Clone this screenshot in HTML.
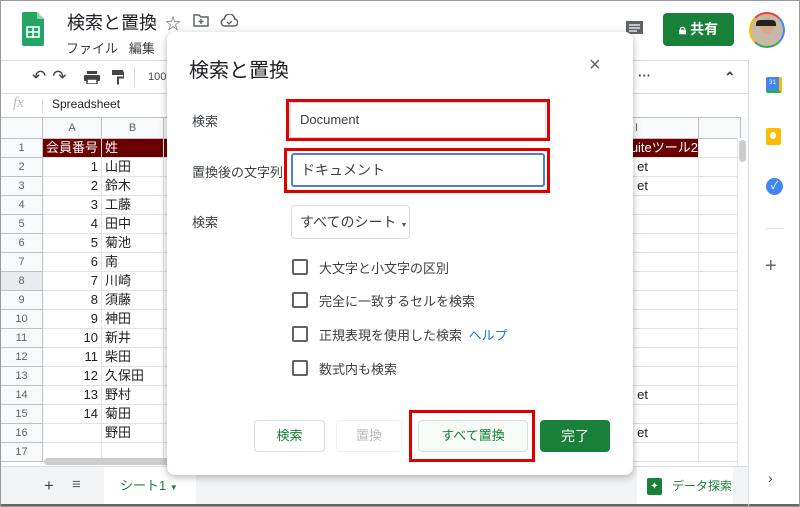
<!DOCTYPE html>
<html><head><meta charset="utf-8"><style>
*{box-sizing:border-box;margin:0;padding:0}
body{width:800px;height:507px;overflow:hidden;background:#fff;font-family:"Liberation Sans","Noto Sans CJK JP",sans-serif;color:#202124;position:relative}
.a{position:absolute;white-space:nowrap}
table{border-collapse:collapse;position:absolute;left:0;top:117px;table-layout:fixed}
td{border:1px solid #e2e3e3;height:19px;font-size:13px;line-height:16px;padding:0 3px;white-space:nowrap;overflow:hidden}
td.rn{background:#f8f9fa;color:#5f6368;text-align:center;font-size:11px;border-color:#c0c0c0}
tr.h td{background:#f8f9fa;color:#5f6368;text-align:center;font-size:11px;height:21px;border-color:#c0c0c0}
tr.r1 td.c{background:#6a0000;color:#fff}
.n{text-align:right}
.lbl{font-size:13px;color:#3c4043}
.cb{position:absolute;left:292px;width:16px;height:16px;border:2px solid #5f6368;border-radius:2px}
.ct{position:absolute;left:319px;font-size:13px;color:#3c4043;white-space:nowrap}
.btn{position:absolute;top:420px;height:32px;border:1px solid #dadce0;border-radius:4px;font-size:13px;color:#188038;text-align:center;line-height:30px;background:#fff}
.red{position:absolute;border:3px solid #e00000}
</style></head><body>
<div class="a" style="left:0;top:0;width:800px;height:507px;border:1px solid #999;z-index:50;pointer-events:none"></div>
<svg class="a" style="left:22px;top:12px" width="22" height="34" viewBox="0 0 22 34"><path d="M2 0h13l7 7v25a2 2 0 0 1-2 2H2a2 2 0 0 1-2-2V2a2 2 0 0 1 2-2z" fill="#23a566"/><path d="M15 0v7h7z" fill="#8ed1b1"/><rect x="5" y="15" width="12" height="10" fill="none" stroke="#fff" stroke-width="1.6"/><path d="M5 20h12M11 15v10" stroke="#fff" stroke-width="1.6"/></svg>
<div class="a" style="left:67px;top:9px;font-size:18px">検索と置換</div>
<div class="a" style="left:165px;top:10px;font-size:16px;color:#5f6368">☆</div>
<svg class="a" style="left:193px;top:13px" width="16" height="14"><path d="M1 2h5l2 2h7v9H1z" fill="none" stroke="#5f6368" stroke-width="1.5"/><path d="M8 6v5M5.5 8.5h5" stroke="#5f6368" stroke-width="1.4"/></svg>
<svg class="a" style="left:220px;top:14px" width="18" height="13"><path d="M5 12h9a3.5 3.5 0 0 0 .5-7A5 5 0 0 0 4.5 5 3.5 3.5 0 0 0 5 12z" fill="none" stroke="#5f6368" stroke-width="1.5"/><path d="M7 8l2 2 3-3" fill="none" stroke="#5f6368" stroke-width="1.3"/></svg>
<div class="a" style="left:66px;top:38px;font-size:13px;color:#3c4043">ファイル&nbsp;&nbsp;&nbsp;編集</div>
<svg class="a" style="left:625px;top:20px" width="19" height="19"><path d="M1 1h17v13H5l-4 4z" fill="#5f6368"/><path d="M4 5h11M4 8h11M4 11h8" stroke="#fff" stroke-width="1.2"/></svg>
<div class="a" style="left:663px;top:13px;width:71px;height:33px;background:#188038;border-radius:4px;color:#fff;font-size:14px;line-height:33px;text-align:center;font-weight:bold">🔒︎ 共有</div>
<div class="a" style="left:749px;top:12px;width:36px;height:36px;border-radius:50%;border:2px solid #4285f4;border-left-color:#fbbc04;border-bottom-color:#34a853;border-top-color:#ea4335;background:#c9b8a8"><div class="a" style="left:9px;top:4px;width:14px;height:16px;border-radius:50%;background:#d9a88a"></div><div class="a" style="left:5px;top:6px;width:20px;height:6px;background:#222;border-radius:4px 4px 0 0"></div></div>
<div class="a" style="left:0;top:60px;width:748px;height:1px;background:#dadce0"></div>
<div class="a" style="left:32px;top:67px;font-size:17px;color:#444;letter-spacing:6px">↶↷</div>
<svg class="a" style="left:84px;top:71px" width="16" height="13"><rect x="3" y="0" width="10" height="3" fill="#444"/><rect x="0" y="4" width="16" height="6" rx="1" fill="#444"/><rect x="3" y="8" width="10" height="5" fill="#fff" stroke="#444" stroke-width="1.5"/></svg>
<svg class="a" style="left:112px;top:70px" width="12" height="15"><rect x="0" y="0" width="11" height="5" fill="#444"/><path d="M11 2.5h1v5H6v7" fill="none" stroke="#444" stroke-width="2"/></svg>
<div class="a" style="left:134px;top:67px;width:1px;height:20px;background:#dadce0"></div>
<div class="a" style="left:148px;top:71px;font-size:11px;color:#444">100</div>
<div class="a" style="left:638px;top:68px;font-size:13px;color:#444;font-weight:bold">···</div>
<div class="a" style="left:724px;top:69px;font-size:14px;color:#444;font-weight:bold">⌃</div>
<div class="a" style="left:0;top:93px;width:748px;height:1px;background:#dadce0"></div>
<div class="a" style="left:13px;top:95px;font-size:15px;color:#bbb;font-style:italic;font-family:'Liberation Serif',serif">fx</div>
<div class="a" style="left:42px;top:99px;width:1px;height:14px;background:#dadce0"></div>
<div class="a" style="left:52px;top:97px;font-size:12px;color:#222">Spreadsheet</div>
<table>
<colgroup><col style="width:42px"><col style="width:56px"><col style="width:62px"><col style="width:535px"><col style="width:42px"><col style="width:11px"></colgroup>
<tr class="h"><td></td><td>A</td><td>B</td><td style="text-align:right;padding-right:60px">I</td><td></td><td style="border:none;background:#f8f9fa"></td></tr>
<tr class="r1"><td class="rn">1</td><td class="c">会員番号</td><td class="c">姓</td><td class="c" style="text-align:right;padding-right:0">uiteツール2</td><td></td><td style="border:none"></td></tr>
<tr><td class="rn">2</td><td class="n">1</td><td>山田</td><td style="text-align:right;padding-right:50px">et</td><td></td><td style="border:none"></td></tr>
<tr><td class="rn">3</td><td class="n">2</td><td>鈴木</td><td style="text-align:right;padding-right:50px">et</td><td></td><td style="border:none"></td></tr>
<tr><td class="rn">4</td><td class="n">3</td><td>工藤</td><td></td><td></td><td style="border:none"></td></tr>
<tr><td class="rn">5</td><td class="n">4</td><td>田中</td><td></td><td></td><td style="border:none"></td></tr>
<tr><td class="rn">6</td><td class="n">5</td><td>菊池</td><td></td><td></td><td style="border:none"></td></tr>
<tr><td class="rn">7</td><td class="n">6</td><td>南</td><td></td><td></td><td style="border:none"></td></tr>
<tr><td class="rn" style="background:#e8eaed">8</td><td class="n">7</td><td>川崎</td><td></td><td></td><td style="border:none"></td></tr>
<tr><td class="rn">9</td><td class="n">8</td><td>須藤</td><td></td><td></td><td style="border:none"></td></tr>
<tr><td class="rn">10</td><td class="n">9</td><td>神田</td><td></td><td></td><td style="border:none"></td></tr>
<tr><td class="rn">11</td><td class="n">10</td><td>新井</td><td></td><td></td><td style="border:none"></td></tr>
<tr><td class="rn">12</td><td class="n">11</td><td>柴田</td><td></td><td></td><td style="border:none"></td></tr>
<tr><td class="rn">13</td><td class="n">12</td><td>久保田</td><td></td><td></td><td style="border:none"></td></tr>
<tr><td class="rn">14</td><td class="n">13</td><td>野村</td><td style="text-align:right;padding-right:50px">et</td><td></td><td style="border:none"></td></tr>
<tr><td class="rn">15</td><td class="n">14</td><td>菊田</td><td></td><td></td><td style="border:none"></td></tr>
<tr><td class="rn">16</td><td class="n"></td><td>野田</td><td style="text-align:right;padding-right:50px">et</td><td></td><td style="border:none"></td></tr>
<tr><td class="rn">17</td><td></td><td></td><td></td><td></td><td style="border:none"></td></tr>
</table>
<div class="a" style="left:737px;top:138px;width:11px;height:330px;background:#fff;border-left:1px solid #e2e3e3"></div>
<div class="a" style="left:739px;top:140px;width:7px;height:22px;background:#ccc;border-radius:4px"></div>
<div class="a" style="left:44px;top:458px;width:200px;height:7px;background:#ccc;border-radius:4px"></div>
<div class="a" style="left:0;top:466px;width:748px;height:41px;background:#f1f3f4;border-top:1px solid #dadce0"></div>
<div class="a" style="left:44px;top:476px;font-size:17px;color:#444">+</div>
<div class="a" style="left:72px;top:476px;font-size:15px;color:#666">≡</div>
<div class="a" style="left:104px;top:467px;width:92px;height:40px;background:#fff;color:#188038;font-size:13px;line-height:38px;padding-left:16px">シート1 <span style="font-size:8px">▼</span></div>
<div class="a" style="left:637px;top:467px;width:96px;height:40px;background:#fff;color:#188038;font-size:12px;line-height:38px;padding-left:10px"><span style="display:inline-block;width:15px;height:17px;background:#188038;border-radius:2px;vertical-align:middle;margin-right:10px;color:#fff;font-size:10px;line-height:17px;text-align:center">✦</span>データ探索</div>
<div class="a" style="left:0;top:504px;width:800px;height:3px;background:#666"></div>
<div class="a" style="left:748px;top:60px;width:1px;height:447px;background:#dadce0"></div>
<div class="a" style="left:766px;top:77px;width:16px;height:16px;border-radius:2px;background:#4285f4;border-bottom:3px solid #34a853;border-right:3px solid #fbbc04;color:#fff;font-size:6px;text-align:center;line-height:12px">31</div>
<div class="a" style="left:766px;top:128px;width:15px;height:17px;border-radius:2px;background:#fbbc04"><div class="a" style="left:4px;top:4px;width:6px;height:7px;border-radius:50%;background:#fff"></div></div>
<div class="a" style="left:766px;top:178px;width:17px;height:17px;border-radius:50%;background:#4285f4;color:#fff;font-size:11px;text-align:center;line-height:17px">✓</div>
<div class="a" style="left:766px;top:228px;width:18px;height:1px;background:#dadce0"></div>
<div class="a" style="left:765px;top:255px;font-size:20px;color:#666">+</div>
<div class="a" style="left:768px;top:470px;font-size:14px;color:#444">›</div>
<div class="a" style="left:167px;top:32px;width:466px;height:443px;background:#fff;border-radius:8px;box-shadow:0 2px 8px rgba(0,0,0,.3)"></div>
<div class="a" style="left:189px;top:54px;font-size:20px;color:#202124">検索と置換</div>
<div class="a" style="left:589px;top:54px;font-size:20px;color:#5f6368">×</div>
<div class="a lbl" style="left:192px;top:111px">検索</div>
<div class="a lbl" style="left:192px;top:162px">置換後の文字列</div>
<div class="a lbl" style="left:192px;top:212px">検索</div>
<div class="red" style="left:286px;top:99px;width:264px;height:42px"></div>
<div class="a" style="left:290px;top:102px;width:256px;height:36px;border:1px solid #ddd;font-size:13px;line-height:34px;padding-left:9px;color:#3c4043">Document</div>
<div class="red" style="left:284px;top:148px;width:266px;height:45px"></div>
<div class="a" style="left:291px;top:153px;width:254px;height:34px;border:2px solid #4a7fd4;border-radius:3px;font-size:14px;line-height:30px;padding-left:8px;color:#3c4043">ドキュメント</div>
<div class="a" style="left:291px;top:205px;width:119px;height:34px;border:1px solid #dadce0;border-radius:4px;font-size:14px;line-height:32px;padding-left:8px;color:#3c4043">すべてのシート<span style="font-size:7px;color:#555;margin-left:4px">▼</span></div>
<div class="cb" style="top:259px"></div><div class="ct" style="top:258px">大文字と小文字の区別</div>
<div class="cb" style="top:292px"></div><div class="ct" style="top:291px">完全に一致するセルを検索</div>
<div class="cb" style="top:326px"></div><div class="ct" style="top:325px">正規表現を使用した検索 <span style="color:#1a73e8;margin-left:3px">ヘルプ</span></div>
<div class="cb" style="top:360px"></div><div class="ct" style="top:359px">数式内も検索</div>
<div class="btn" style="left:254px;width:71px">検索</div>
<div class="btn" style="left:336px;width:66px;color:#bbb;border-color:#f1f1f1">置換</div>
<div class="red" style="left:409px;top:410px;width:126px;height:52px"></div>
<div class="btn" style="left:418px;width:110px;background:#f6fbf7">すべて置換</div>
<div class="btn" style="left:540px;width:70px;background:#188038;border-color:#188038;color:#fff;font-size:14px">完了</div>
</body></html>
